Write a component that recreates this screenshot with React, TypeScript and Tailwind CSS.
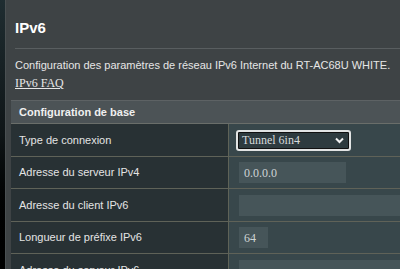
import React from "react";

const rows = [
  { label: "Type de connexion", h: "h-[33px]", kind: "select" },
  { label: "Adresse du serveur IPv4", h: "h-[32px]", kind: "input", w: "w-[107px]", value: "0.0.0.0" },
  { label: "Adresse du client IPv6", h: "h-[33px]", kind: "input", w: "w-[200px]", value: "" },
  { label: "Longueur de préfixe IPv6", h: "h-[32px]", kind: "input", w: "w-[29px]", value: "64" },
  { label: "Adresse du serveur IPv6", h: "h-[33px]", kind: "input", w: "w-[200px]", value: "" },
];

export default function App() {
  return (
    <div className="w-[400px] h-[269px] overflow-hidden flex bg-[#3e4345] font-['Liberation_Sans',Arial,sans-serif]">
      <div className="w-[6px] shrink-0 h-full bg-gradient-to-b from-[#1f2d31] via-[#0f1517] to-[#000000] border-r border-[#4a5052]" />
      <div className="flex-1 min-w-0 pl-[5px] pt-[19px]">
        <div className="pl-[4px]">
          <div className="text-[15px] leading-[18px] font-bold text-white">IPv6</div>
          <div className="mt-[11px] h-px w-[600px] bg-[#595e60]" />
          <div className="mt-[9px] text-[11px] leading-[14px] text-[#e6e6e6] whitespace-nowrap">
            Configuration des paramètres de réseau IPv6 Internet du RT-AC68U WHITE.
          </div>
          <div className="mt-[4px] text-[12px] leading-[14px] text-[#e6e6e6] underline font-['Liberation_Serif','Times_New_Roman',serif]">
            IPv6 FAQ
          </div>
        </div>
        <div className="mt-[10px] w-[600px] border-t border-[#5d6264]">
          <div className="h-[23px] bg-[#4c5356] border-b border-[#6a6e6a] flex items-center pl-[8px] text-[11px] font-bold text-[#f0f0f0]">
            Configuration de base
          </div>
          {rows.map((r, i) => (
            <div key={i} className={`${r.h} flex border-b border-[#5f6258]`}>
              <div className="w-[218px] shrink-0 bg-[#283134] border-r border-[#5f6358] flex items-center pl-[8px] text-[11px] text-[#e4e4e4] whitespace-nowrap">
                {r.label}
              </div>
              <div className="flex-1 bg-[#38474b] flex items-center pl-[10px]">
                {r.kind === "select" ? (
                  <div className="relative -ml-[3px] w-[115px] h-[21px] rounded-[3px] border-2 border-[#e2e4e4] bg-[#2e3b3f] flex items-center pl-[4px] text-[12px] text-[#d6dadb] font-['Liberation_Serif','Times_New_Roman',serif] shadow-[inset_0_0_0_1px_#111]">
                    Tunnel 6in4
                    <svg className="absolute right-[5px] top-[5px]" width="9" height="7" viewBox="0 0 9 7">
                      <path d="M1 1.5 L4.5 5 L8 1.5" stroke="#f2f2f2" strokeWidth="2" fill="none" />
                    </svg>
                  </div>
                ) : (
                  <div className={`${r.w} h-[21px] bg-[#465559] flex items-center pl-[5px] text-[12px] text-[#cfd4d5] font-['Liberation_Serif','Times_New_Roman',serif]`}>
                    {r.value}
                  </div>
                )}
              </div>
            </div>
          ))}
        </div>
      </div>
    </div>
  );
}
